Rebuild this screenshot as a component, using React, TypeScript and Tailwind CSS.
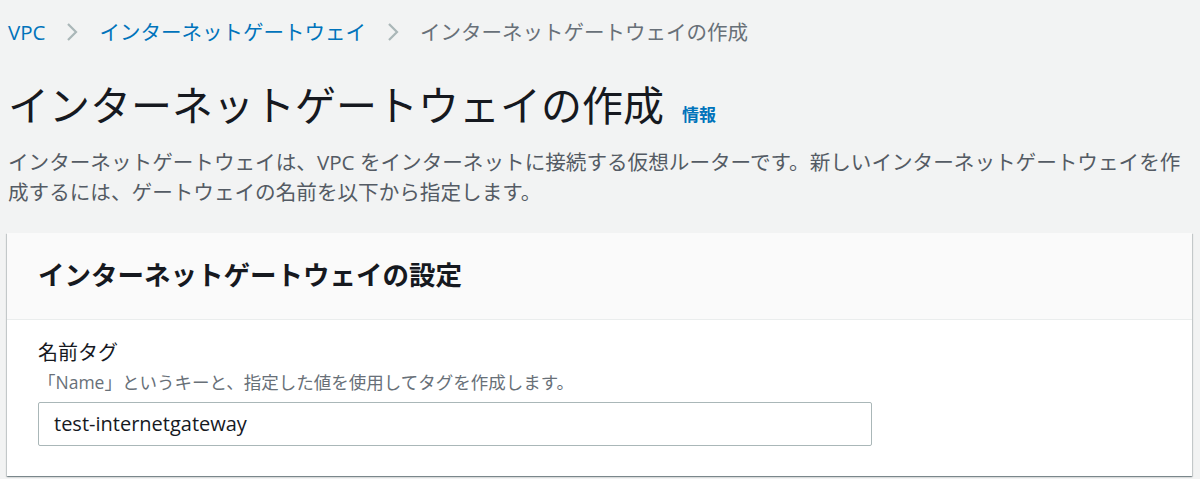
import React from 'react';

const font = { fontFamily: '"Open Sans", "Noto Sans CJK JP", sans-serif' };

const Chevron = () => (
  <svg width="12" height="20" viewBox="0 0 12 20" className="mx-[21px] shrink-0">
    <path d="M2 2 L10 10 L2 18" fill="none" stroke="#aab7b8" strokeWidth="2.2" />
  </svg>
);

export default function App() {
  return (
    <div className="min-h-[479px] bg-[#f2f3f3] px-2 pt-[18px]" style={font}>
      {/* Breadcrumb */}
      <nav className="flex items-center h-[28px] text-[20.5px] leading-[28px]">
        <a className="text-[#0073bb]">VPC</a>
        <Chevron />
        <a className="text-[#0073bb]">インターネットゲートウェイ</a>
        <Chevron />
        <span className="text-[#687078]">インターネットゲートウェイの作成</span>
      </nav>

      {/* Title */}
      <div className="mt-[34px] flex items-baseline gap-[18px]">
        <h1 className="text-[41px] leading-[50px] text-[#16191f] font-normal">
          インターネットゲートウェイの作成
        </h1>
        <a className="text-[17px] font-bold text-[#0073bb]">情報</a>
      </div>

      <p className="mt-[17px] text-[20.6px] leading-[30px] text-[#545b64]">
        インターネットゲートウェイは、VPC をインターネットに接続する仮想ルーターです。新しいインターネットゲートウェイを作
        <br />
        成するには、ゲートウェイの名前を以下から指定します。
      </p>

      {/* Card */}
      <div className="mt-[26px] -ml-px bg-white shadow-[0_1px_1px_0_rgba(0,28,36,0.3),1px_1px_1px_0_rgba(0,28,36,0.15),-1px_1px_1px_0_rgba(0,28,36,0.15)]">
        <div className="bg-[#fafafa] border-b border-[#eaeded] px-[31px] pt-[24px] pb-[26px]">
          <h2 className="text-[26.5px] leading-[36px] font-bold text-[#16191f]">
            インターネットゲートウェイの設定
          </h2>
        </div>
        <div className="px-[31px] pt-[20px] pb-[30px]">
          <div className="text-[20px] leading-[26px] text-[#16191f]">名前タグ</div>
          <div className="mt-[5px] text-[17.5px] leading-[22px] text-[#687078]">
            「Name」というキーと、指定した値を使用してタグを作成します。
          </div>
          <div className="mt-[9px] w-[834px] h-[44px] border border-[#aab7b8] rounded-[2px] bg-white flex items-center px-[15px] text-[20px] text-[#16191f]">
            test-internetgateway
          </div>
        </div>
      </div>
    </div>
  );
}
